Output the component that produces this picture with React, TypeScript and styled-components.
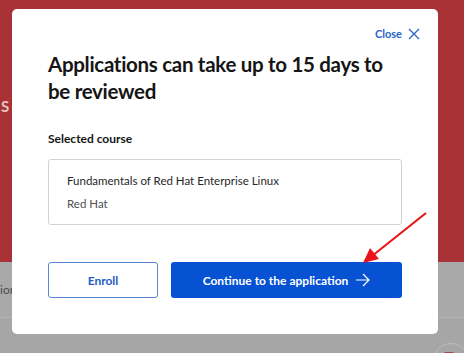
import styled, { createGlobalStyle } from 'styled-components'

const GlobalStyle = createGlobalStyle`
  html, body {
    margin: 0;
    padding: 0;
    width: 464px;
    height: 353px;
    overflow: hidden;
    font-family: Lato, 'Open Sans', sans-serif;
  }
`

const App = () => {
  return (
    <>
      <GlobalStyle />
      <Page>
        <Hero>
          <HeroText>S</HeroText>
        </Hero>
        <Band>
          <BandText>ior</BandText>
        </Band>
        <Footer>
          <Bubble />
        </Footer>
      </Page>

      <Modal>
        <CloseRow>
          <CloseButton>
            Close
            <svg width="12" height="12" viewBox="0 0 12 12">
              <path d="M1 1 L11 11 M11 1 L1 11" stroke="#2b63c9" strokeWidth="1.3" fill="none" />
            </svg>
          </CloseButton>
        </CloseRow>
        <Title>Applications can take up to 15 days to be reviewed</Title>
        <Label>Selected course</Label>
        <CourseCard>
          <CourseName>Fundamentals of Red Hat Enterprise Linux</CourseName>
          <CourseVendor>Red Hat</CourseVendor>
        </CourseCard>
        <Actions>
          <SecondaryButton>Enroll</SecondaryButton>
          <PrimaryButton>
            Continue to the application
            <svg width="15" height="14" viewBox="0 0 15 14">
              <path d="M1 7 H14 M8 1 L14 7 L8 13" stroke="#fff" strokeWidth="1.2" fill="none" />
            </svg>
          </PrimaryButton>
        </Actions>
      </Modal>

      <Pointer width="80" height="70" viewBox="0 0 80 70">
        <line x1="74" y1="5" x2="20" y2="48" stroke="#e8161c" strokeWidth="2.2" />
        <polygon points="11,55 18,40 27,51" fill="#e8161c" />
      </Pointer>
    </>
  )
}

const Page = styled.div`
  width: 464px;
  height: 353px;
  display: flex;
  flex-direction: column;
  overflow: hidden;
`

const Hero = styled.section`
  height: 262px;
  flex-shrink: 0;
  background: #a83236;
  display: flex;
  align-items: flex-start;
  padding-top: 97px;
  box-sizing: border-box;
`

const HeroText = styled.span`
  font-size: 15px;
  font-weight: 700;
  color: #e7c3c4;
  margin-left: 1px;
`

const Band = styled.section`
  height: 55px;
  flex-shrink: 0;
  background: #a9a9a9;
  border-bottom: 1px solid #b3b3b3;
  display: flex;
  align-items: center;
`

const BandText = styled.span`
  font-size: 12px;
  color: #4a4a4a;
  margin-left: 0;
`

const Footer = styled.section`
  flex: 1;
  background: #a6a6a6;
  position: relative;
  overflow: hidden;
`

const Bubble = styled.div`
  position: absolute;
  left: 433px;
  top: 25px;
  width: 34px;
  height: 34px;
  border-radius: 50%;
  border: 1px solid #bdbdbd;
  &::after {
    content: '';
    position: absolute;
    left: 10px;
    top: 8px;
    width: 8px;
    height: 6px;
    border: 1px solid #a84a4a;
    border-radius: 1px;
  }
`

const Modal = styled.div`
  position: absolute;
  left: 12px;
  top: 9px;
  width: 426px;
  height: 325px;
  box-sizing: border-box;
  background: #fff;
  border-radius: 5px;
  padding: 18px 36px 0 36px;
  display: flex;
  flex-direction: column;
`

const CloseRow = styled.div`
  display: flex;
  justify-content: flex-end;
  margin-right: -18px;
`

const CloseButton = styled.button`
  border: none;
  background: none;
  padding: 0;
  display: flex;
  align-items: center;
  gap: 6px;
  font-family: inherit;
  font-size: 11px;
  font-weight: 700;
  color: #2b63c9;
`

const Title = styled.h2`
  margin: 11px 0 0;
  font-size: 20.5px;
  line-height: 27px;
  font-weight: 700;
  color: #151515;
  letter-spacing: -0.3px;
  width: 350px;
`

const Label = styled.div`
  margin-top: 26px;
  font-size: 12px;
  font-weight: 700;
  color: #151515;
`

const CourseCard = styled.div`
  margin-top: 13px;
  height: 66px;
  box-sizing: border-box;
  border: 1px solid #d2d2d2;
  border-radius: 3px;
  padding: 14px 18px 0;
  display: flex;
  flex-direction: column;
  gap: 10px;
  font-size: 11.5px;
`

const CourseName = styled.div`
  color: #262626;
`

const CourseVendor = styled.div`
  color: #4f4f4f;
`

const Actions = styled.div`
  margin-top: 37px;
  display: flex;
  gap: 13px;
`

const SecondaryButton = styled.button`
  width: 110px;
  height: 36px;
  border: 1px solid #5b87d4;
  border-radius: 3px;
  background: #fff;
  font-family: inherit;
  font-size: 12px;
  font-weight: 700;
  color: #1f5cc4;
`

const PrimaryButton = styled.button`
  flex: 1;
  height: 36px;
  border: none;
  border-radius: 3px;
  background: #0652d2;
  font-family: inherit;
  font-size: 12px;
  font-weight: 700;
  color: #fff;
  display: flex;
  align-items: center;
  justify-content: center;
  gap: 7px;
`

const Pointer = styled.svg`
  position: absolute;
  left: 352px;
  top: 208px;
`

export default App
